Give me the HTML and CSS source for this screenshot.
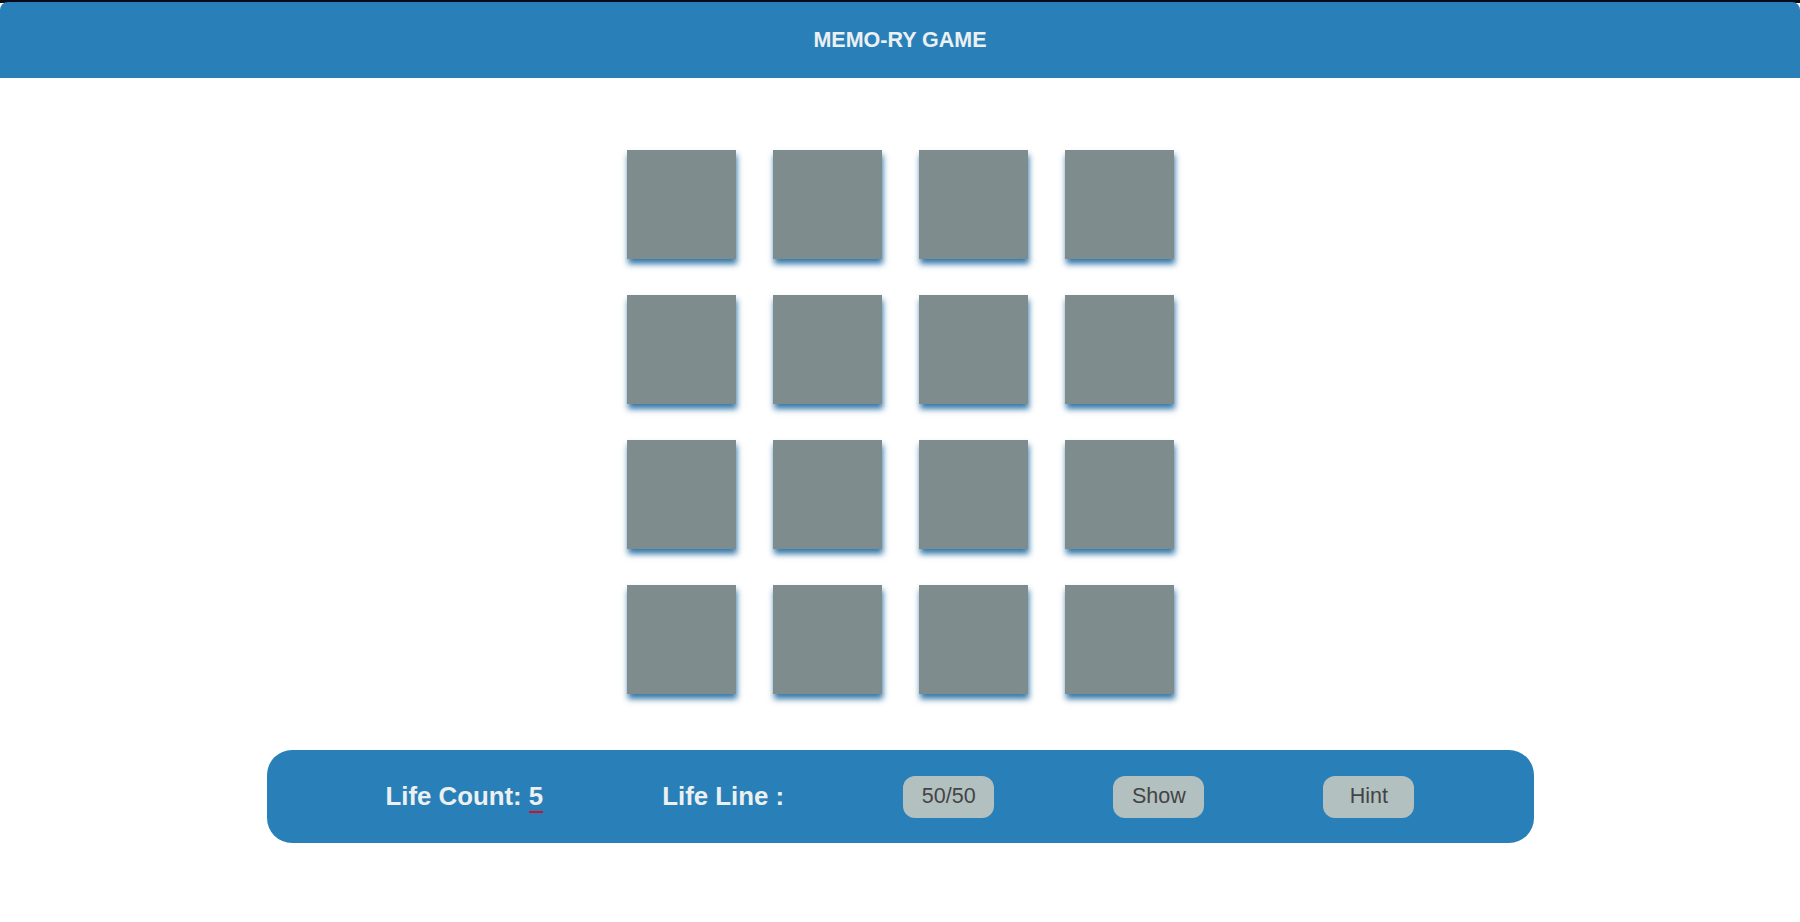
FILE: index.html
```html
<!DOCTYPE html>
<html>
<head>
<meta charset="utf-8">
<title>Memo-ry Game</title>
<link rel="stylesheet" href="styles.css">
</head>
<body>
<div class="page">
  <header class="header"><h1 class="title">MEMO-RY GAME</h1></header>
  <main class="board">
    <div class="card"></div><div class="card"></div><div class="card"></div><div class="card"></div>
    <div class="card"></div><div class="card"></div><div class="card"></div><div class="card"></div>
    <div class="card"></div><div class="card"></div><div class="card"></div><div class="card"></div>
    <div class="card"></div><div class="card"></div><div class="card"></div><div class="card"></div>
  </main>
  <footer class="bar">
    <div class="stat">Life Count: <span class="count">5</span></div>
    <div class="stat">Life Line :</div>
    <button class="btn">50/50</button>
    <button class="btn">Show</button>
    <button class="btn">Hint</button>
  </footer>
</div>
</body>
</html>
```
FILE: styles.css
```css
html, body {
  margin: 0;
  padding: 0;
  background: #ffffff;
}
body {
  font-family: "Liberation Sans", Arial, sans-serif;
}
.page {
  border-top: 3px solid #080c1a;
  background: #ffffff;
}
.header {
  height: 76px;
  background: #2980b9;
  border-radius: 8px 8px 0 0;
  display: flex;
  align-items: center;
  justify-content: center;
  margin-top: -1px;
}
.title {
  margin: 0;
  color: #ecf0f1;
  font-size: 21.5px;
  font-weight: bold;
  padding-top: 1px;
}
.board {
  display: grid;
  grid-template-columns: repeat(4, 109px);
  grid-auto-rows: 109px;
  column-gap: 37px;
  row-gap: 36px;
  justify-content: center;
  margin-top: 72px;
}
.card {
  background: #7f8c8d;
  box-shadow: 1px 5px 6px rgba(31, 105, 160, 0.9);
}
.bar {
  box-sizing: border-box;
  margin: 56px auto 0;
  width: 1267px;
  height: 93px;
  background: #2980b9;
  border-radius: 25px;
  display: flex;
  align-items: center;
  justify-content: space-evenly;
}
.stat {
  color: #ecf0f1;
  font-size: 25.8px;
  font-weight: bold;
}
.count {
  border-bottom: 2px solid #d0112b;
  padding-bottom: 1px;
}
.btn {
  font-family: inherit;
  font-size: 21.5px;
  color: #444444;
  background: #b2c0c0;
  border: none;
  border-radius: 12px;
  height: 42px;
  width: 91px;
  padding: 0;
}
```
